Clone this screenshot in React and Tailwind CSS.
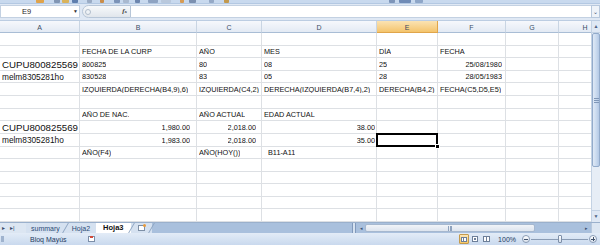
import React from "react";

const COLS = ["A", "B", "C", "D", "E", "F", "G", "H"];
const WIDTH = {
  A: "w-[80px]",
  B: "w-[117px]",
  C: "w-[65px]",
  D: "w-[115px]",
  E: "w-[61px]",
  F: "w-[68px]",
  G: "w-[53px]",
  H: "w-[53px]",
};
const ROW_H = [
  "h-[13px]", "h-[12px]", "h-[13px]", "h-[12px]", "h-[13px]",
  "h-[13px]", "h-[12px]", "h-[13px]", "h-[13px]", "h-[12px]",
  "h-[13px]", "h-[12px]", "h-[13px]", "h-[12px]", "h-[13px]",
];

const big = "text-[9.7px] pl-0";
const mid = "text-[8.3px] pl-0";

const ROWS = [
  {},
  { B: { t: "FECHA DE LA CURP" }, C: { t: "AÑO" }, D: { t: "MES" }, E: { t: "DÍA" }, F: { t: "FECHA" } },
  {
    A: { t: "CUPU800825569", cls: big },
    B: { t: "800825" },
    C: { t: "80" },
    D: { t: "08" },
    E: { t: "25" },
    F: { t: "25/08/1980", cls: "justify-end pr-[3px]" },
  },
  {
    A: { t: "melm8305281ho", cls: mid },
    B: { t: "830528" },
    C: { t: "83" },
    D: { t: "05" },
    E: { t: "28" },
    F: { t: "28/05/1983", cls: "justify-end pr-[3px]" },
  },
  {
    B: { t: "IZQUIERDA(DERECHA(B4,9),6)" },
    C: { t: "IZQUIERDA(C4,2)" },
    D: { t: "DERECHA(IZQUIERDA(B7,4),2)" },
    E: { t: "DERECHA(B4,2)" },
    F: { t: "FECHA(C5,D5,E5)" },
  },
  {},
  { B: { t: "AÑO DE NAC." }, C: { t: "AÑO ACTUAL" }, D: { t: "EDAD ACTUAL" } },
  {
    A: { t: "CUPU800825569", cls: big },
    B: { t: "1,980.00", cls: "justify-end pr-[6px]" },
    C: { t: "2,018.00", cls: "justify-end pr-[5px]" },
    D: { t: "38.00", cls: "justify-end pr-[1px]" },
  },
  {
    A: { t: "melm8305281ho", cls: mid },
    B: { t: "1,983.00", cls: "justify-end pr-[6px]" },
    C: { t: "2,018.00", cls: "justify-end pr-[5px]" },
    D: { t: "35.00", cls: "justify-end pr-[1px]" },
    E: { sel: true },
  },
  { B: { t: "AÑO(F4)" }, C: { t: "AÑO(HOY())" }, D: { t: "B11-A11", cls: "pl-[6px]" } },
  {},
  {},
  {},
  {},
  {},
];

function Ribbon() {
  const blocks = [
    ["ml-[36px] w-[8px]", "bg-[#e0a34a]"],
    ["ml-[10px] w-[6px]", "bg-[#8196b4]"],
    ["ml-[2px] w-[7px]", "bg-[#d9b35c]"],
    ["ml-[3px] w-[6px]", "bg-[#5f7fae]"],
    ["ml-[9px] w-[5px]", "bg-[#9aabc4]"],
    ["ml-[8px] w-[4px]", "bg-[#c98d4a]"],
    ["ml-[10px] w-[6px]", "bg-[#7c93b8]"],
    ["ml-[3px] w-[6px]", "bg-[#a9b9cf]"],
    ["ml-[6px] w-[5px]", "bg-[#6d86ae]"],
    ["ml-[8px] w-[10px]", "bg-[#8ea3c2]"],
    ["ml-[3px] w-[10px]", "bg-[#b9c8dc]"],
    ["ml-[9px] w-[4px]", "bg-[#d69b54]"],
    ["ml-[5px] w-[7px]", "bg-[#7b90b0]"],
    ["ml-[13px] w-[5px]", "bg-[#95a9c6]"],
    ["ml-[10px] w-[5px]", "bg-[#c2994e]"],
    ["ml-[160px] w-[6px]", "bg-[#7d95b9]"],
    ["ml-[4px] w-[12px]", "bg-[#6f8bb6]"],
    ["ml-[4px] w-[8px]", "bg-[#8ea6c8]"],
  ];
  return (
    <div className="h-[4px] flex bg-[#c8d9ee] border-b border-[#b3c8e2]">
      {blocks.map(([a, b], i) => (
        <div key={i} className={`${a} ${b} h-[3px] rounded-b-[1px]`} />
      ))}
    </div>
  );
}

function FormulaBar() {
  return (
    <div className="h-[17px] flex items-end pb-[2px] bg-[#dfe8f4] border-b border-[#bccde2] text-[#1f1f1f]">
      <div className="w-[80px] h-[13px] bg-white border border-[#c3d1e2] flex items-center">
        <span className="ml-[21px] text-[7.5px] leading-none">E9</span>
        <span className="ml-auto mr-[1px] text-[5px] leading-none text-[#333]">▼</span>
      </div>
      <div className="w-[2px]" />
      <div className="w-[49px] h-[13px] rounded-l-[7px] border border-[#b7c6d8] bg-linear-to-b from-[#f7f9fb] to-[#e1e6ec] flex items-center">
        <div className="ml-[2px] w-[6px] h-[6px] rounded-full border border-[#b1bdcc] bg-[#eef2f6]" />
        <span className="ml-auto mr-[3px] text-[7px] leading-none italic font-bold font-['Liberation_Serif',serif] text-[#3a3a3a]">
          f<span className="text-[5px]">x</span>
        </span>
      </div>
      <div className="flex-1 h-[13px] bg-white border-y border-[#c3d1e2]" />
      <div className="w-[9px] h-[13px] bg-[#eef3f9] border border-[#b7c8dd] flex items-center justify-center text-[6px] leading-none text-[#40526c]">
        ⌄
      </div>
    </div>
  );
}

function Grid() {
  return (
    <div className="flex-1 overflow-hidden text-[7.3px] leading-none text-[#111]">
      <div className="w-[612px] flex h-[12px]">
        {COLS.map((c) =>
          c === "E" ? (
            <div
              key={c}
              className={`${WIDTH[c]} shrink-0 flex items-center justify-center pt-px bg-linear-to-b from-[#fbe3b2] to-[#f4c46b] border-r border-b border-[#e0a54a] text-[7px] text-[#3b4a5f]`}
            >
              {c}
            </div>
          ) : (
            <div
              key={c}
              className={`${WIDTH[c]} shrink-0 flex items-center justify-center pt-px bg-linear-to-b from-[#f6f8fc] to-[#e3eaf4] border-r border-b border-r-[#c9d5e3] border-b-[#a9bdd5] text-[7px] text-[#3b4d66]`}
            >
              {c}
            </div>
          )
        )}
      </div>
      {ROWS.map((row, ri) => (
        <div key={ri} className={`w-[612px] flex ${ROW_H[ri]}`}>
          {COLS.map((c) => {
            const cell = row[c];
            return (
              <div
                key={c}
                className={`${WIDTH[c]} shrink-0 relative flex items-center whitespace-nowrap pl-[2px] pt-px border-r border-b border-[#dde0e4] ${
                  cell && cell.cls ? cell.cls : ""
                }`}
              >
                {cell && cell.t ? <span className="overflow-hidden">{cell.t}</span> : null}
                {cell && cell.sel ? (
                  <>
                    <div className="absolute -left-px -top-px -right-px -bottom-px border-2 border-black z-10" />
                    <div className="absolute -right-[3px] -bottom-[3px] w-[5px] h-[5px] bg-black border border-white z-20" />
                  </>
                ) : null}
              </div>
            );
          })}
        </div>
      ))}
    </div>
  );
}

function VScroll() {
  return (
    <div className="w-[9px] flex flex-col bg-[#e6edf6] border-l border-[#c3d2e4]">
      <div className="h-[12px] flex items-center justify-center text-[5px] text-[#4d6182] bg-[#dfe8f4] border-b border-[#c3d2e4]">
        ▲
      </div>
      <div className="h-[134px] rounded-[2px] border border-[#93abcb] bg-linear-to-r from-[#dfe9f6] via-[#cbdbef] to-[#b4c9e6] flex items-center justify-center">
        <div className="w-[5px] h-[5px] border-y border-[#7f97b8] flex items-center">
          <div className="w-full h-px bg-[#7f97b8]" />
        </div>
      </div>
      <div className="flex-1" />
      <div className="h-[12px] flex items-center justify-center text-[5px] text-[#4d6182] bg-[#dfe8f4] border-t border-[#c3d2e4]">
        ▼
      </div>
    </div>
  );
}

function TabBar() {
  return (
    <div className="h-[11px] flex bg-[#a9c0dd] border-t border-[#9ab0cc] text-[7px] leading-none">
      <div className="w-[26px] flex items-center gap-[5px] pl-[2px] bg-[#dce6f2] text-[6px] text-[#3a4e6c]">
        <span>▸</span>
        <span>▸|</span>
      </div>
      <div className="flex items-stretch bg-[#d5e1f0]">
        <div className="px-[5px] flex items-center text-[#2c4a74]">summary</div>
        <div className="w-px bg-[#8ea5c2] -skew-x-[30deg]" />
        <div className="px-[6px] flex items-center text-[#2c4a74]">Hoja2</div>
        <div className="px-[7px] flex items-center bg-white font-bold text-[#111] text-[7.5px]">Hoja3</div>
        <div className="w-px bg-[#8ea5c2] -skew-x-[30deg]" />
        <div className="px-[6px] flex items-center">
          <div className="w-[7px] h-[6px] border border-[#7d8fa6] bg-white relative">
            <div className="absolute -top-[2px] -right-[2px] w-[3px] h-[3px] bg-[#e89a3b] rounded-full" />
          </div>
        </div>
        <div className="w-px bg-[#8ea5c2] -skew-x-[30deg]" />
      </div>
      <div className="flex-1" />
      <div className="w-[4px] border-x border-[#8199bb] bg-[#d6e2f0] mr-[2px]" />
      <div className="w-[7px] flex items-center justify-center text-[5px] text-[#3d5272]">◂</div>
      <div className="w-[170px] my-px rounded-[2px] border border-[#a6b8cf] bg-linear-to-b from-[#f1f4f8] to-[#dde4ee] flex items-center justify-center">
        <div className="w-[4px] h-[5px] border-x border-[#8fa3be] flex justify-center">
          <div className="w-px h-full bg-[#8fa3be]" />
        </div>
      </div>
      <div className="w-[46px]" />
      <div className="w-[10px] flex items-center justify-center text-[5px] text-[#3d5272]">▸</div>
      <div className="w-[9px] bg-[#dce6f2] border-l border-[#b7c8dd]" />
    </div>
  );
}

function StatusBar() {
  return (
    <div className="h-[12px] flex items-center bg-linear-to-b from-[#e3ecf7] to-[#c9d9ee] text-[7px] leading-none text-[#1e3a5f]">
      <div className="ml-[1px] w-[3px] h-[6px] bg-[#9fb3ce]" />
      <span className="ml-[26px]">Bloq Mayús</span>
      <div className="ml-[21px] w-[7px] h-[6px] border border-[#7b8ea8] bg-white relative">
        <div className="absolute -top-px left-px w-[3px] h-[2px] bg-[#d24a3a]" />
      </div>
      <div className="flex-1" />
      <div className="flex items-center gap-[1px]">
        <div className="w-[10px] h-[10px] rounded-[1px] border border-[#c49a4c] bg-linear-to-b from-[#fde6b4] to-[#f6c867] flex items-center justify-center">
          <div className="w-[6px] h-[5px] border border-[#6d7f99] bg-white grid grid-cols-2">
            <div className="border-r border-[#6d7f99]" />
          </div>
        </div>
        <div className="w-[10px] h-[10px] flex items-center justify-center">
          <div className="w-[6px] h-[6px] border border-[#6d7f99] bg-white flex items-center justify-center">
            <div className="w-[2px] h-[2px] bg-[#6d7f99]" />
          </div>
        </div>
        <div className="w-[10px] h-[10px] flex items-center justify-center">
          <div className="w-[7px] h-[6px] border border-[#6d7f99] bg-white flex">
            <div className="w-[3px] border-r border-[#6d7f99]" />
          </div>
        </div>
      </div>
      <span className="ml-[7px]">100%</span>
      <div className="ml-[6px] w-[8px] h-[8px] rounded-full border border-[#8a9cb5] bg-linear-to-b from-white to-[#dbe3ee] flex items-center justify-center">
        <div className="w-[4px] h-px bg-[#40526c]" />
      </div>
      <div className="relative w-[57px] h-[8px] flex items-center mx-[1px]">
        <div className="w-full h-px bg-[#8a9cb5]" />
        <div className="absolute left-[27px] top-0 w-[4px] h-[8px] rounded-[1px] border border-[#7d8fa8] bg-linear-to-b from-white to-[#d7e0ec]" />
      </div>
      <div className="mr-[3px] w-[8px] h-[8px] rounded-full border border-[#8a9cb5] bg-linear-to-b from-white to-[#dbe3ee] relative flex items-center justify-center">
        <div className="w-[4px] h-px bg-[#40526c]" />
        <div className="absolute w-px h-[4px] bg-[#40526c]" />
      </div>
    </div>
  );
}

export default function App() {
  return (
    <div className="w-[600px] h-[245px] overflow-hidden bg-white flex flex-col font-['Liberation_Sans',Arial,sans-serif]">
      <Ribbon />
      <FormulaBar />
      <div className="flex h-[201px]">
        <Grid />
        <VScroll />
      </div>
      <TabBar />
      <StatusBar />
    </div>
  );
}
